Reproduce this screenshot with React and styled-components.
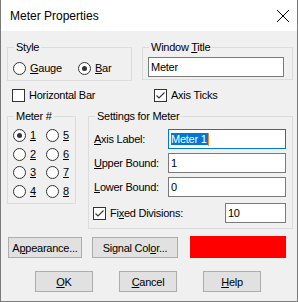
import React from "react";
import styled, { createGlobalStyle } from "styled-components";

const Global = createGlobalStyle`
  html, body { margin: 0; padding: 0; background: #ffffff; }
  body { font-family: "Liberation Sans", Arial, sans-serif; }
  * { box-sizing: border-box; }
`;

const Window = styled.div`
  width: 298px;
  height: 302px;
  border: 1px solid #7a7a7a;
  border-top: none;
  background: #f0f0f0;
  display: flex;
  flex-direction: column;
  font-size: 11px;
  letter-spacing: -0.25px;
  color: #000;
`;

const TitleBar = styled.div`
  height: 31px;
  flex: none;
  background: #ffffff;
  display: flex;
  align-items: center;
  padding-left: 9px;
  font-size: 12px;
  letter-spacing: 0;
`;

const CloseIcon = styled.svg`
  margin-left: auto;
  margin-right: 7px;
  width: 14px;
  height: 14px;
`;

const Content = styled.div`
  display: flex;
  flex-direction: column;
  padding: 0 4px 0 6px;
`;

const Row = styled.div`
  display: flex;
  align-items: ${(p) => p.$align || "flex-start"};
  gap: ${(p) => p.$gap || 0}px;
  margin-top: ${(p) => p.$top || 0}px;
  margin-left: ${(p) => p.$left || 0}px;
  height: ${(p) => (p.$h ? `${p.$h}px` : "auto")};
`;

const GroupBox = styled.div`
  position: relative;
  flex: none;
  border: 1px solid #dcdcdc;
  width: ${(p) => p.$w}px;
  height: ${(p) => p.$h}px;
  padding: ${(p) => p.$pad};
`;

const Caption = styled.span`
  position: absolute;
  top: -7px;
  left: 6px;
  padding: 0 2px;
  line-height: 13px;
  background: #f0f0f0;
`;

const Option = styled.label`
  display: flex;
  align-items: center;
  gap: 4px;
  height: 13px;
  line-height: 13px;
  width: ${(p) => (p.$w ? `${p.$w}px` : "auto")};
  margin-left: ${(p) => p.$left || 0}px;
  flex: ${(p) => (p.$grow ? 1 : "none")};
  white-space: nowrap;
`;

const Circle = styled.span`
  position: relative;
  flex: none;
  width: 13px;
  height: 13px;
  border: 1px solid #333333;
  border-radius: 50%;
  background: #ffffff;
  &::after {
    content: "";
    display: ${(p) => (p.$on ? "block" : "none")};
    position: absolute;
    left: 3px;
    top: 3px;
    width: 5px;
    height: 5px;
    border-radius: 50%;
    background: #333333;
  }
`;

const Square = styled.span`
  flex: none;
  width: 13px;
  height: 13px;
  border: 1px solid #333333;
  background: #ffffff;
  display: flex;
`;

const MeterGrid = styled.div`
  display: grid;
  grid-template-columns: 33px auto;
  grid-template-rows: repeat(4, 13px);
  row-gap: 5.67px;
  grid-auto-flow: column;
`;

const FieldRow = styled.div`
  display: flex;
  align-items: center;
  height: 20px;
  margin-top: ${(p) => p.$top || 0}px;
`;

const FieldLabel = styled.span`
  width: 74px;
  flex: none;
  white-space: nowrap;
`;

const EditBox = styled.div`
  flex: none;
  width: ${(p) => p.$w}px;
  height: 20px;
  border: 1px solid ${(p) => (p.$focus ? "#0078d7" : "#7a7a7a")};
  background: #ffffff;
  padding: 0 2px;
  display: flex;
  align-items: center;
  white-space: nowrap;
`;

const Selected = styled.span`
  background: #0078d7;
  color: #ffffff;
  line-height: 12px;
  padding-right: 1px;
`;

const Caret = styled.span`
  width: 1px;
  height: 13px;
  background: #f08a24;
`;

const Button = styled.div`
  flex: none;
  width: ${(p) => p.$w}px;
  height: 21px;
  margin-left: ${(p) => p.$left || 0}px;
  border: 1px solid #adadad;
  background: #e1e1e1;
  display: flex;
  align-items: center;
  justify-content: center;
  white-space: nowrap;
`;

const ColorSwatch = styled.div`
  flex: none;
  width: 96px;
  height: 22px;
  background: ${(p) => p.$color};
`;

function Radio({ on, children, w, left }) {
  return (
    <Option $w={w} $left={left}>
      <Circle $on={on} />
      <span>{children}</span>
    </Option>
  );
}

function Check({ on, children, w, left, grow }) {
  return (
    <Option $w={w} $left={left} $grow={grow}>
      <Square>
        {on && (
          <svg width="11" height="11" viewBox="0 0 11 11">
            <polyline
              points="1.5,5.5 4,8 9.5,2.5"
              fill="none"
              stroke="#333"
              strokeWidth="1.1"
            />
          </svg>
        )}
      </Square>
      <span>{children}</span>
    </Option>
  );
}

export default function App() {
  const meters = [1, 2, 3, 4, 5, 6, 7, 8];
  return (
    <>
      <Global />
      <Window>
        <TitleBar>
          <span>Meter Properties</span>
          <CloseIcon viewBox="0 0 14 14">
            <path d="M1 1 L13 13 M13 1 L1 13" stroke="#000" strokeWidth="1" />
          </CloseIcon>
        </TitleBar>
        <Content>
          <Row $top={16} $gap={10}>
            <GroupBox $w={125} $h={34} $pad="14px 0 0 5px">
              <Caption>Style</Caption>
              <Row>
                <Radio w={65}>
                  <u>G</u>auge
                </Radio>
                <Radio on>
                  <u>B</u>ar
                </Radio>
              </Row>
            </GroupBox>
            <GroupBox $w={151} $h={33} $pad="9px 0 0 5px">
              <Caption>
                Window <u>T</u>itle
              </Caption>
              <EditBox $w={136}>Meter</EditBox>
            </GroupBox>
          </Row>
          <Row $top={8} $h={13}>
            <Check w={142} left={5}>
              Horizontal Bar
            </Check>
            <Check on>Axis Ticks</Check>
          </Row>
          <Row $top={14} $gap={12}>
            <GroupBox $w={69} $h={88} $pad="12px 0 0 5px">
              <Caption>Meter #</Caption>
              <MeterGrid>
                {meters.map((n) => (
                  <Radio key={n} on={n === 1}>
                    <u>{n}</u>
                  </Radio>
                ))}
              </MeterGrid>
            </GroupBox>
            <GroupBox $w={205} $h={113} $pad="12px 6px 0 5px">
              <Caption>Settings for Meter</Caption>
              <FieldRow>
                <FieldLabel>
                  <u>A</u>xis Label:
                </FieldLabel>
                <EditBox $w={118} $focus>
                  <Selected>Meter 1</Selected>
                  <Caret />
                </EditBox>
              </FieldRow>
              <FieldRow $top={4}>
                <FieldLabel>
                  <u>U</u>pper Bound:
                </FieldLabel>
                <EditBox $w={118}>1</EditBox>
              </FieldRow>
              <FieldRow $top={4}>
                <FieldLabel>
                  <u>L</u>ower Bound:
                </FieldLabel>
                <EditBox $w={118}>0</EditBox>
              </FieldRow>
              <FieldRow $top={6}>
                <Check on grow left={-1}>
                  Fi<u>x</u>ed Divisions:
                </Check>
                <EditBox $w={61}>10</EditBox>
              </FieldRow>
            </GroupBox>
          </Row>
          <Row $top={7} $h={22} $align="flex-end">
            <Button $w={74} $left={1}>
              A<u>p</u>pearance...
            </Button>
            <Button $w={86} $left={10}>
              Signal Col<u>o</u>r...
            </Button>
            <Row $left={12}>
              <ColorSwatch $color="#ff0000" />
            </Row>
          </Row>
          <Row $top={13} $left={28} $gap={26}>
            <Button $w={58}>
              <u>O</u>K
            </Button>
            <Button $w={58}>
              <u>C</u>ancel
            </Button>
            <Button $w={58}>
              <u>H</u>elp
            </Button>
          </Row>
        </Content>
      </Window>
    </>
  );
}
